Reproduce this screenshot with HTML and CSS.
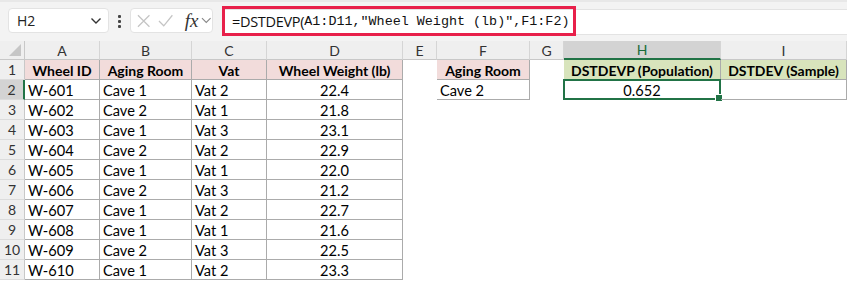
FILE: index.html
```html
<!DOCTYPE html>
<html lang="en">
<head>
  <meta charset="UTF-8" />
  <title>DSTDEVP</title>
  <link rel="stylesheet" href="styles.css">
</head>
<body>
  <div class="toolbar">
    <div class="namebox">
      <span>H2</span>
      <svg class="chev" width="12" height="8" viewBox="0 0 12 8"><path d="M1.5 1.5 L6 6 L10.5 1.5" fill="none" stroke="#333" stroke-width="1.4"/></svg>
    </div>
    <div class="dots"><i></i><i></i><i></i></div>
    <div class="fxbox">
      <svg width="14" height="14" viewBox="0 0 14 14"><path d="M1 1 L13 13 M13 1 L1 13" stroke="#c4c4c4" stroke-width="1.3"/></svg>
      <svg width="16" height="14" viewBox="0 0 16 14"><path d="M1 7 L6 12 L15 1" fill="none" stroke="#c4c4c4" stroke-width="1.3"/></svg>
      <span class="fx">fx</span>
      <svg width="11" height="7" viewBox="0 0 11 7"><path d="M1 1 L5.5 5.5 L10 1" fill="none" stroke="#888" stroke-width="1.2"/></svg>
    </div>
    <div class="formula">
      <div class="formula-text"><span class="fn">=DSTDEVP(</span><span class="args">A1:D11,"Wheel Weight (lb)",F1:F2)</span></div>
    </div>
  </div>

  <div class="sheet">
    <div class="hd corner"></div>
    <div class="hd">A</div><div class="hd">B</div><div class="hd">C</div><div class="hd">D</div>
    <div class="hd">E</div><div class="hd">F</div><div class="hd">G</div><div class="hd hd-sel">H</div><div class="hd">I</div>

    <div class="rn">1</div>
    <div class="c b pink th">Wheel ID</div><div class="c b pink th">Aging Room</div><div class="c b pink th">Vat</div><div class="c b pink th">Wheel Weight (lb)</div>
    <div class="c"></div><div class="c b pink th">Aging Room</div><div class="c"></div>
    <div class="c b green th">DSTDEVP (Population)</div><div class="c b green th">DSTDEV (Sample)</div>

    <div class="rn rn-sel">2</div>
    <div class="c b">W-601</div><div class="c b">Cave 1</div><div class="c b">Vat 2</div><div class="c b num">22.4</div>
    <div class="c"></div><div class="c b">Cave 2</div><div class="c"></div>
    <div class="c b num sel">0.652<span class="handle"></span></div><div class="c b"></div>

    <div class="rn">3</div>
    <div class="c b">W-602</div><div class="c b">Cave 2</div><div class="c b">Vat 1</div><div class="c b num">21.8</div>
    <div class="c"></div><div class="c"></div><div class="c"></div><div class="c"></div><div class="c"></div>

    <div class="rn">4</div>
    <div class="c b">W-603</div><div class="c b">Cave 1</div><div class="c b">Vat 3</div><div class="c b num">23.1</div>
    <div class="c"></div><div class="c"></div><div class="c"></div><div class="c"></div><div class="c"></div>

    <div class="rn">5</div>
    <div class="c b">W-604</div><div class="c b">Cave 2</div><div class="c b">Vat 2</div><div class="c b num">22.9</div>
    <div class="c"></div><div class="c"></div><div class="c"></div><div class="c"></div><div class="c"></div>

    <div class="rn">6</div>
    <div class="c b">W-605</div><div class="c b">Cave 1</div><div class="c b">Vat 1</div><div class="c b num">22.0</div>
    <div class="c"></div><div class="c"></div><div class="c"></div><div class="c"></div><div class="c"></div>

    <div class="rn">7</div>
    <div class="c b">W-606</div><div class="c b">Cave 2</div><div class="c b">Vat 3</div><div class="c b num">21.2</div>
    <div class="c"></div><div class="c"></div><div class="c"></div><div class="c"></div><div class="c"></div>

    <div class="rn">8</div>
    <div class="c b">W-607</div><div class="c b">Cave 1</div><div class="c b">Vat 2</div><div class="c b num">22.7</div>
    <div class="c"></div><div class="c"></div><div class="c"></div><div class="c"></div><div class="c"></div>

    <div class="rn">9</div>
    <div class="c b">W-608</div><div class="c b">Cave 1</div><div class="c b">Vat 1</div><div class="c b num">21.6</div>
    <div class="c"></div><div class="c"></div><div class="c"></div><div class="c"></div><div class="c"></div>

    <div class="rn">10</div>
    <div class="c b">W-609</div><div class="c b">Cave 2</div><div class="c b">Vat 3</div><div class="c b num">22.5</div>
    <div class="c"></div><div class="c"></div><div class="c"></div><div class="c"></div><div class="c"></div>

    <div class="rn">11</div>
    <div class="c b">W-610</div><div class="c b">Cave 1</div><div class="c b">Vat 2</div><div class="c b num">23.3</div>
    <div class="c"></div><div class="c"></div><div class="c"></div><div class="c"></div><div class="c"></div>
  </div>
</body>
</html>
```

FILE: styles.css
```css
body {
  margin: 0;
  width: 847px;
  height: 282px;
  overflow: hidden;
  background: #ffffff;
  font-family: Lato, "Liberation Sans", sans-serif;
  color: #000;
}
.toolbar {
  height: 41px;
  background: #f3f3f3;
  border-top: 2px solid #e8e8e8;
  box-sizing: border-box;
  display: flex;
  align-items: flex-start;
  padding-top: 6px;
}
.namebox {
  margin-left: 8px;
  width: 101px;
  height: 25px;
  background: #fff;
  border: 1px solid #e3e3e3;
  border-radius: 4px;
  box-sizing: border-box;
  display: flex;
  align-items: center;
  justify-content: space-between;
  padding: 0 6px 0 8px;
  font-family: "Open Sans", sans-serif;
  font-size: 14px;
  color: #222;
}
.dots {
  width: 21px;
  display: flex;
  flex-direction: column;
  align-items: center;
  gap: 2px;
  padding-top: 7px;
}
.dots i {
  width: 3px;
  height: 3px;
  background: #444;
  border-radius: 1px;
}
.fxbox {
  width: 83px;
  height: 25px;
  background: #fff;
  border: 1px solid #e3e3e3;
  border-radius: 4px;
  box-sizing: border-box;
  display: flex;
  align-items: center;
  gap: 8px;
  padding-left: 6px;
}
.fx {
  font-family: "Liberation Serif", serif;
  font-style: italic;
  font-size: 19px;
  color: #333;
  margin-left: 3px;
  margin-right: -5px;
  line-height: 1;
}
.formula {
  margin-left: 9px;
  flex: 1;
  height: 26px;
  background: #fff;
  border-top: 1px solid #e3e3e3;
  border-bottom: 1px solid #e3e3e3;
  box-sizing: border-box;
  margin-top: 1px;
  position: relative;
}
.formula-text {
  position: absolute;
  left: 0;
  top: -4px;
  width: 354px;
  height: 30px;
  border: 3px solid #e8204a;
  box-sizing: border-box;
  display: flex;
  align-items: center;
  padding-left: 7px;
  color: #111;
}
.fn {
  font-family: "Open Sans", sans-serif;
  font-size: 14.5px;
  letter-spacing: -0.3px;
}
.args {
  font-family: "Liberation Mono", monospace;
  font-size: 13.4px;
}
.sheet {
  display: grid;
  grid-template-columns: 25px 75px 92px 75px 136px 34px 93px 34px 157px 126px;
  grid-template-rows: 19px repeat(11, 20px);
  font-size: 14.6px;
}
.hd {
  background: #efefef;
  border-right: 1px solid #d5d5d5;
  border-bottom: 1px solid #c8c8c8;
  box-sizing: border-box;
  display: flex;
  align-items: center;
  justify-content: center;
  font-size: 14px;
  color: #333;
}
.corner {
  position: relative;
  border-right: 1px solid #c8c8c8;
}
.corner::after {
  content: '';
  position: absolute;
  right: 3px;
  bottom: 3px;
  width: 0;
  height: 0;
  border-left: 12px solid transparent;
  border-bottom: 12px solid #c6c6c6;
}
.hd-sel {
  background: #d3d3d3;
  color: #1a6b3c;
  border-bottom: 2px solid #217346;
}
.rn {
  background: #efefef;
  border-right: 1px solid #c8c8c8;
  border-bottom: 1px solid #dcdcdc;
  box-sizing: border-box;
  display: flex;
  align-items: center;
  justify-content: center;
  font-size: 14px;
  color: #333;
}
.rn-sel {
  background: #d3d3d3;
  border-right: 2px solid #217346;
}
.c {
  box-sizing: border-box;
  display: flex;
  align-items: center;
  padding-left: 3px;
  padding-top: 1px;
  white-space: nowrap;
  position: relative;
}
.b {
  border-right: 1px solid #ababab;
  border-bottom: 1px solid #ababab;
}
.pink { background: #f2dcdb; }
.green { background: #d8e4bc; }
.th {
  font-weight: bold;
  font-size: 14px;
  justify-content: center;
  padding-left: 0;
}
.num {
  justify-content: center;
  padding-left: 0;
}
.sel {
  border: 2px solid #217346;
  margin-top: -1px;
  margin-left: -1px;
}
.handle {
  position: absolute;
  right: -4px;
  bottom: -4px;
  width: 6px;
  height: 6px;
  background: #217346;
  border: 1px solid #fff;
}
```
